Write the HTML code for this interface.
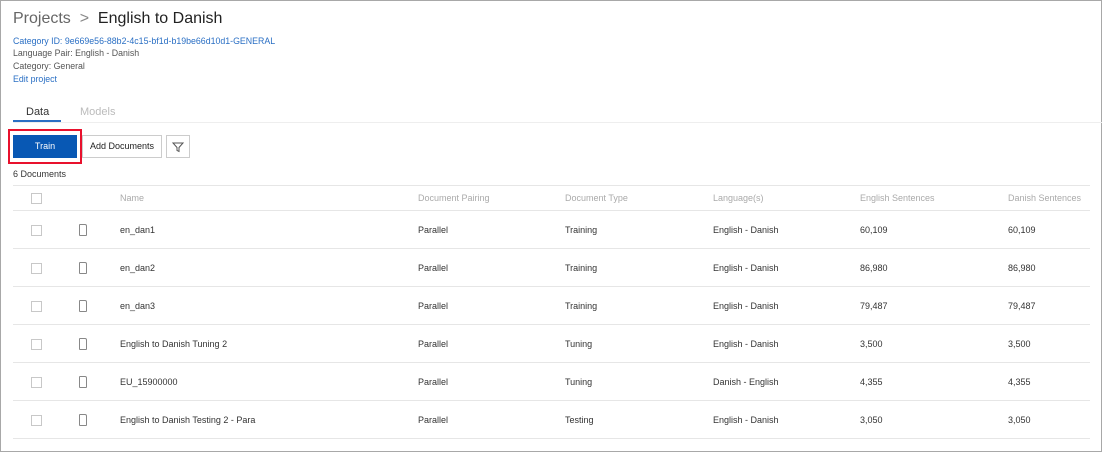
<!DOCTYPE html>
<html><head><style>
body{margin:0;width:1102px;height:452px;overflow:hidden;background:#fff;font-family:"Liberation Sans",sans-serif;color:#333;}
.frame{position:absolute;left:0;top:0;width:1100px;height:450px;border:1px solid #a8a8a8;}
.a{position:absolute;white-space:nowrap;}
.s{font-size:9px;}
.cb{position:absolute;width:9px;height:9px;border:1px solid #c8c8c8;background:#fff;}
.doc{position:absolute;width:6px;height:10px;border:1px solid #888;border-radius:1px 2px 1px 1px;}
.line{position:absolute;left:13px;width:1077px;height:1px;background:#e6e6e6;}
</style></head><body>
<div class="frame"></div>
<div class="a" style="left:13px;top:10px;font-size:16px;color:#666">Projects&nbsp; <span style="color:#888">&gt;</span>&nbsp; <span style="color:#222">English to Danish</span></div>
<div class="a" style="left:13px;top:36px;font-size:8.8px;color:#2a6fc4">Category ID: 9e669e56-88b2-4c15-bf1d-b19be66d10d1-GENERAL</div>
<div class="a" style="left:13px;top:48px;font-size:8.8px;color:#555">Language Pair: English - Danish</div>
<div class="a" style="left:13px;top:61px;font-size:8.8px;color:#555">Category: General</div>
<div class="a" style="left:13px;top:74px;font-size:8.8px;color:#2a6fc4">Edit project</div>
<div class="a" style="left:26px;top:106px;font-size:11px;color:#333">Data</div>
<div class="a" style="left:80px;top:106px;font-size:11px;color:#bbb">Models</div>
<div class="a" style="left:13px;top:120px;width:48px;height:2px;background:#2a6fc4"></div>
<div class="a" style="left:13px;top:122px;width:1089px;height:1px;background:#eee"></div>
<div class="a" style="left:8px;top:129px;width:74px;height:35px;border:2px solid #e8112d;box-sizing:border-box"></div>
<div class="a" style="left:13px;top:135px;width:64px;height:23px;background:#0858b4;color:#fff;font-size:9px;text-align:center;line-height:23px">Train</div>
<div class="a" style="left:82px;top:135px;width:78px;height:21px;border:1px solid #ccc;font-size:9px;color:#222;text-align:center;line-height:21px">Add Documents</div>
<div class="a" style="left:166px;top:135px;width:22px;height:21px;border:1px solid #ccc"><svg width="22" height="21"><path d="M6 7h10l-4 4.5v4l-2-1v-3z" fill="none" stroke="#555" stroke-width="1"/></svg></div>
<div class="a s" style="left:13px;top:169px;color:#333">6 Documents</div>
<div class="line" style="top:185px"></div>
<div class="cb" style="left:31px;top:193px"></div>
<div class="a s" style="left:120px;top:193px;color:#aaa">Name</div>
<div class="a s" style="left:418px;top:193px;color:#aaa">Document Pairing</div>
<div class="a s" style="left:565px;top:193px;color:#aaa">Document Type</div>
<div class="a s" style="left:713px;top:193px;color:#aaa">Language(s)</div>
<div class="a s" style="left:860px;top:193px;color:#aaa">English Sentences</div>
<div class="a s" style="left:1008px;top:193px;color:#aaa">Danish Sentences</div>
<div class="line" style="top:210px"></div>
<div class="cb" style="left:31px;top:225px"></div><div class="doc" style="left:79px;top:224px"></div>
<div class="a s" style="left:120px;top:225px">en_dan1</div><div class="a s" style="left:418px;top:225px">Parallel</div><div class="a s" style="left:565px;top:225px">Training</div><div class="a s" style="left:713px;top:225px">English - Danish</div><div class="a s" style="left:860px;top:225px">60,109</div><div class="a s" style="left:1008px;top:225px">60,109</div>
<div class="line" style="top:248px"></div>
<div class="cb" style="left:31px;top:263px"></div><div class="doc" style="left:79px;top:262px"></div>
<div class="a s" style="left:120px;top:263px">en_dan2</div><div class="a s" style="left:418px;top:263px">Parallel</div><div class="a s" style="left:565px;top:263px">Training</div><div class="a s" style="left:713px;top:263px">English - Danish</div><div class="a s" style="left:860px;top:263px">86,980</div><div class="a s" style="left:1008px;top:263px">86,980</div>
<div class="line" style="top:286px"></div>
<div class="cb" style="left:31px;top:301px"></div><div class="doc" style="left:79px;top:300px"></div>
<div class="a s" style="left:120px;top:301px">en_dan3</div><div class="a s" style="left:418px;top:301px">Parallel</div><div class="a s" style="left:565px;top:301px">Training</div><div class="a s" style="left:713px;top:301px">English - Danish</div><div class="a s" style="left:860px;top:301px">79,487</div><div class="a s" style="left:1008px;top:301px">79,487</div>
<div class="line" style="top:324px"></div>
<div class="cb" style="left:31px;top:339px"></div><div class="doc" style="left:79px;top:338px"></div>
<div class="a s" style="left:120px;top:339px">English to Danish Tuning 2</div><div class="a s" style="left:418px;top:339px">Parallel</div><div class="a s" style="left:565px;top:339px">Tuning</div><div class="a s" style="left:713px;top:339px">English - Danish</div><div class="a s" style="left:860px;top:339px">3,500</div><div class="a s" style="left:1008px;top:339px">3,500</div>
<div class="line" style="top:362px"></div>
<div class="cb" style="left:31px;top:377px"></div><div class="doc" style="left:79px;top:376px"></div>
<div class="a s" style="left:120px;top:377px">EU_15900000</div><div class="a s" style="left:418px;top:377px">Parallel</div><div class="a s" style="left:565px;top:377px">Tuning</div><div class="a s" style="left:713px;top:377px">Danish - English</div><div class="a s" style="left:860px;top:377px">4,355</div><div class="a s" style="left:1008px;top:377px">4,355</div>
<div class="line" style="top:400px"></div>
<div class="cb" style="left:31px;top:415px"></div><div class="doc" style="left:79px;top:414px"></div>
<div class="a s" style="left:120px;top:415px">English to Danish Testing 2 - Para</div><div class="a s" style="left:418px;top:415px">Parallel</div><div class="a s" style="left:565px;top:415px">Testing</div><div class="a s" style="left:713px;top:415px">English - Danish</div><div class="a s" style="left:860px;top:415px">3,050</div><div class="a s" style="left:1008px;top:415px">3,050</div>
<div class="line" style="top:438px"></div>
</body></html>
